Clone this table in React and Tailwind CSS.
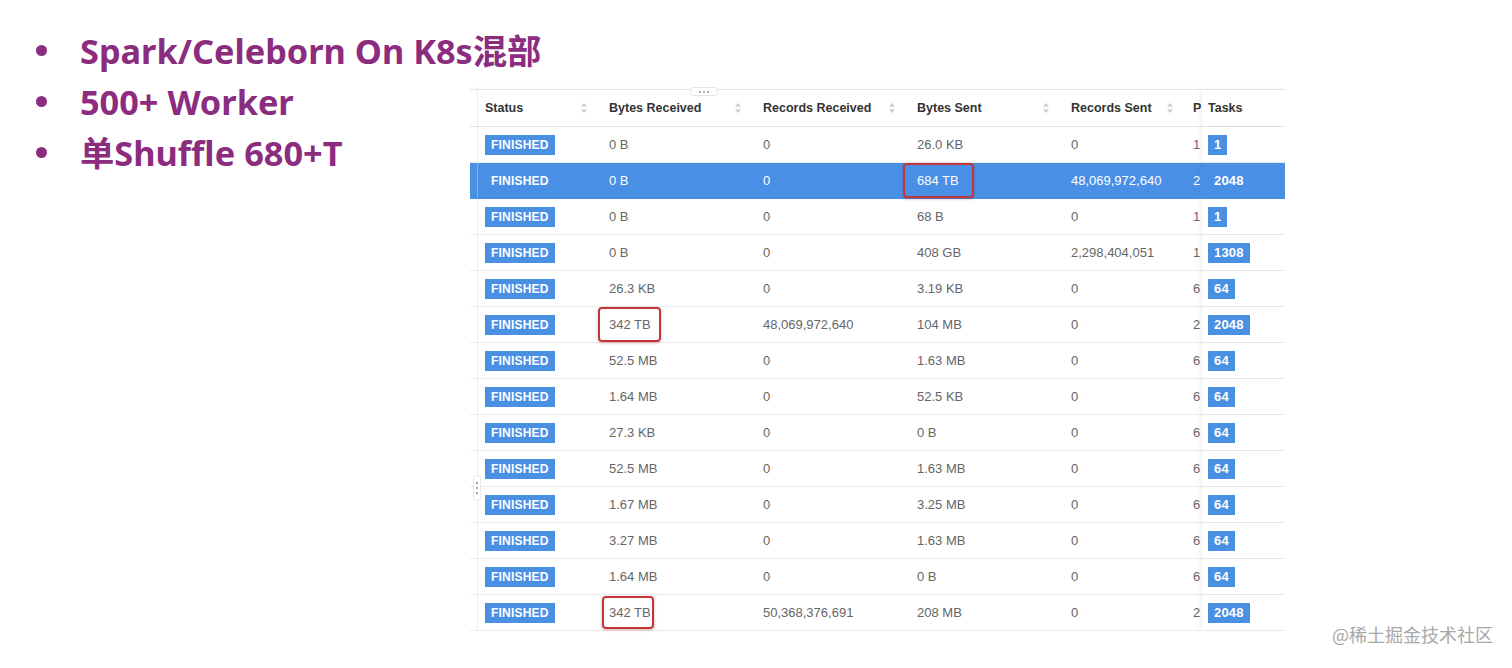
import React from "react";

const rows = [
  ["0 B", "0", "26.0 KB", "0", "1", "1"],
  ["0 B", "0", "684 TB", "48,069,972,640", "2", "2048"],
  ["0 B", "0", "68 B", "0", "1", "1"],
  ["0 B", "0", "408 GB", "2,298,404,051", "1", "1308"],
  ["26.3 KB", "0", "3.19 KB", "0", "6", "64"],
  ["342 TB", "48,069,972,640", "104 MB", "0", "2", "2048"],
  ["52.5 MB", "0", "1.63 MB", "0", "6", "64"],
  ["1.64 MB", "0", "52.5 KB", "0", "6", "64"],
  ["27.3 KB", "0", "0 B", "0", "6", "64"],
  ["52.5 MB", "0", "1.63 MB", "0", "6", "64"],
  ["1.67 MB", "0", "3.25 MB", "0", "6", "64"],
  ["3.27 MB", "0", "1.63 MB", "0", "6", "64"],
  ["1.64 MB", "0", "0 B", "0", "6", "64"],
  ["342 TB", "50,368,376,691", "208 MB", "0", "2", "2048"],
];

// red highlight boxes: row index -> column index + box offsets
const boxes = {
  1: { col: 2, cls: "-left-[14px] -right-[15px] -top-[8px] -bottom-[8px]" },
  5: { col: 0, cls: "-left-[11px] -right-[10px] -top-[8px] -bottom-[8px]" },
  13: { col: 0, cls: "-left-[7px] -right-[3px] -top-[7px] -bottom-[7px]" },
};

const bullets = ["Spark/Celeborn On K8s混部", "500+ Worker", "单Shuffle 680+T"];

const SortIcon = () => (
  <svg width="8" height="12" viewBox="0 0 8 12" className="shrink-0">
    <path d="M4 1 L7 4.5 L1 4.5 Z" fill="#c9c9c9" />
    <path d="M4 11 L7 7.5 L1 7.5 Z" fill="#c9c9c9" />
  </svg>
);

const HeadCell = ({ label, w, first }) => (
  <div
    className={`flex items-center justify-between h-full pr-[9px] ${w} ${
      first ? "border-l border-[#ececec] pl-[7px]" : "pl-[12px]"
    }`}
  >
    <span>{label}</span>
    <SortIcon />
  </div>
);

const Badge = ({ children, plain, big }) => (
  <span
    className={`inline-block h-[20px] leading-[20px] px-[6px] font-bold tracking-[0.2px] text-white ${
      big ? "text-[13px]" : "text-[12px]"
    } ${plain ? "" : "bg-[#4a90e2]"}`}
  >
    {children}
  </span>
);

const App = () => {
  return (
    <div
      className="relative flex w-[1512px] h-[668px] bg-white overflow-hidden"
      style={{ fontFamily: '"Liberation Sans", Arial, sans-serif' }}
    >
      {/* left bullets */}
      <div className="w-[470px] shrink-0 pt-[25px] pl-[36px]">
        <ul
          className="text-[#8c2c7f] font-bold text-[34.3px] whitespace-nowrap"
          style={{ fontFamily: '"Noto Sans", "Noto Sans CJK SC", sans-serif' }}
        >
          {bullets.map((b, i) => (
            <li key={i} className="flex items-center h-[51px]">
              <span className="w-[11px] h-[11px] rounded-full bg-[#8c2c7f] mr-[33px] shrink-0" />
              <span>{b}</span>
            </li>
          ))}
        </ul>
      </div>

      {/* table */}
      <div className="pt-[89px]">
        <div className="relative w-[815px] text-[13px] text-[#666]">
          <div className="border-t border-[#e6e6e6] shadow-[0_-1px_2px_rgba(0,0,0,0.04)]" />
          {/* header */}
          <div className="flex h-[37px] border-b border-[#e4e4e4] text-[#333] font-semibold text-[12.5px]">
            <div className="w-[7px] shrink-0" />
            <HeadCell label="Status" w="w-[120px]" first />
            <HeadCell label="Bytes Received" w="w-[154px]" />
            <HeadCell label="Records Received" w="w-[154px]" />
            <HeadCell label="Bytes Sent" w="w-[154px]" />
            <HeadCell label="Records Sent" w="w-[124px]" />
            <div className="w-[18px] h-full flex items-center pl-[10px] overflow-hidden">P</div>
            <div className="flex-1 h-full flex items-center pl-[6px] border-l border-[#f1f1f1] shadow-[-2px_0_3px_rgba(0,0,0,0.03)]">
              Tasks
            </div>
          </div>

          {/* rows */}
          {rows.map((r, i) => {
            const sel = i === 1;
            const box = boxes[i];
            return (
              <div
                key={i}
                className={`flex h-[36px] items-center border-b ${
                  sel ? "bg-[#4a8fe6] text-white border-[#4a8fe6]" : "border-[#ebebeb]"
                }`}
              >
                <div className="w-[7px] shrink-0" />
                <div
                  className={`w-[120px] h-full flex items-center pl-[7px] border-l ${
                    sel ? "border-[#7fb0ee]" : "border-[#ececec]"
                  }`}
                >
                  <Badge plain={sel}>FINISHED</Badge>
                </div>
                {r.slice(0, 4).map((c, j) => (
                  <div
                    key={j}
                    className={`${j === 3 ? "w-[124px]" : "w-[154px]"} h-full flex items-center pl-[12px]`}
                  >
                    <span className="relative">
                      {c}
                      {box && box.col === j && (
                        <span
                          className={`absolute ${box.cls} border-2 border-[#c2363a] rounded-[4px] shadow-[0_1px_3px_rgba(150,30,30,0.35)]`}
                        />
                      )}
                    </span>
                  </div>
                ))}
                <div className="w-[18px] h-full flex items-center pl-[10px] overflow-hidden">{r[4]}</div>
                <div
                  className={`flex-1 h-full flex items-center pl-[6px] border-l ${
                    sel ? "border-[#4a8fe6]" : "border-[#f1f1f1]"
                  } shadow-[-2px_0_3px_rgba(0,0,0,0.03)]`}
                >
                  <Badge plain={sel} big>
                    {r[5]}
                  </Badge>
                </div>
              </div>
            );
          })}

          {/* resize handle on top */}
          <div className="absolute left-[220px] -top-[2px] w-[28px] h-[9px] rounded-[3px] bg-white border border-[#e8e8e8] flex items-center justify-center gap-[2px]">
            <span className="w-[2px] h-[2px] rounded-full bg-[#999]" />
            <span className="w-[2px] h-[2px] rounded-full bg-[#999]" />
            <span className="w-[2px] h-[2px] rounded-full bg-[#999]" />
          </div>
          {/* side handle */}
          <div className="absolute left-[3px] top-[386px] w-[8px] h-[26px] rounded-[3px] bg-white border border-[#e8e8e8] flex flex-col items-center justify-center gap-[3px]">
            <span className="w-[2px] h-[2px] rounded-full bg-[#888]" />
            <span className="w-[2px] h-[2px] rounded-full bg-[#888]" />
            <span className="w-[2px] h-[2px] rounded-full bg-[#888]" />
          </div>
        </div>
      </div>

      {/* watermark */}
      <div
        className="absolute right-[19px] bottom-[20px] text-[18px] text-[#a8a8a8]"
        style={{ fontFamily: '"Noto Sans CJK SC", sans-serif' }}
      >
        @稀土掘金技术社区
      </div>
    </div>
  );
};

export default App;
